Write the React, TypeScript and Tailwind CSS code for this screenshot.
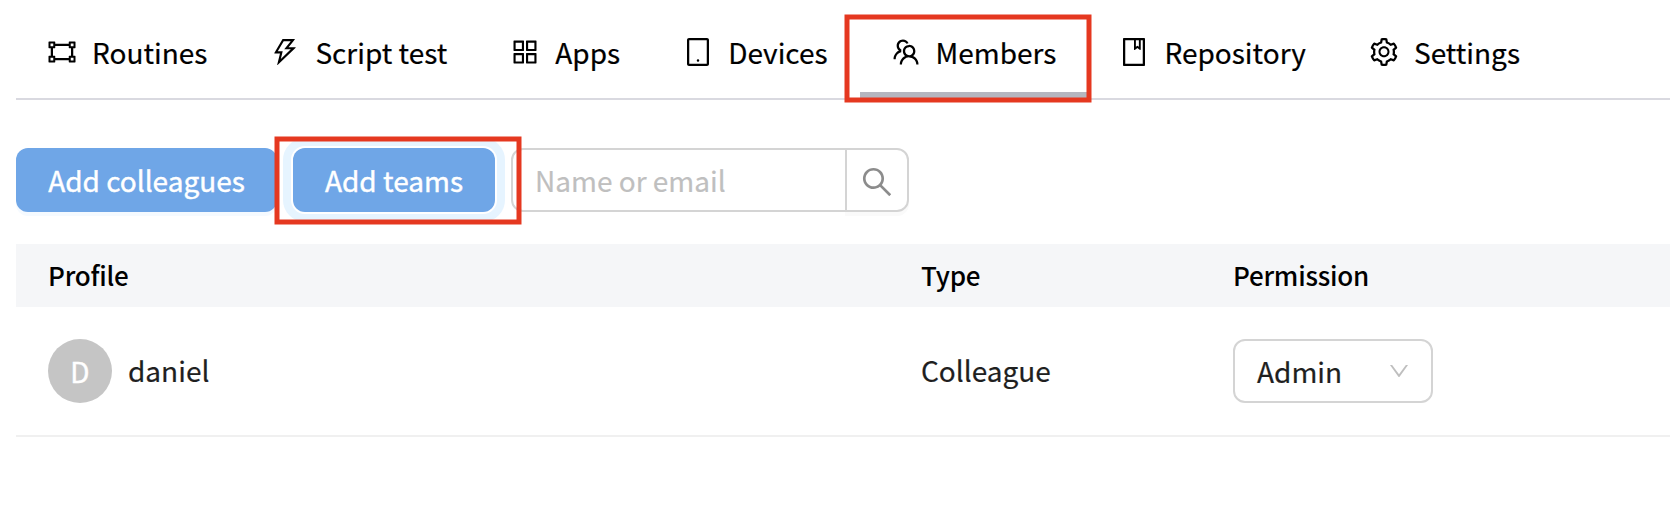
import type { ReactNode } from "react";
import {
  AiOutlineAppstore,
  AiOutlineBook,
  AiOutlineDown,
  AiOutlineGateway,
  AiOutlineSearch,
  AiOutlineSetting,
  AiOutlineTablet,
  AiOutlineTeam,
  AiOutlineThunderbolt,
} from "react-icons/ai";

const tabs = [
  { label: "Routines", Icon: AiOutlineGateway },
  { label: "Script test", Icon: AiOutlineThunderbolt },
  { label: "Apps", Icon: AiOutlineAppstore },
  { label: "Devices", Icon: AiOutlineTablet },
  { label: "Members", Icon: AiOutlineTeam, active: true },
  { label: "Repository", Icon: AiOutlineBook },
  { label: "Settings", Icon: AiOutlineSetting },
];

function Highlight({ className, children }: { className: string; children: ReactNode }) {
  return (
    <div className="relative flex">
      {children}
      <svg
        className={`pointer-events-none absolute z-10 h-[89px] w-[248px] max-w-none ${className}`}
        viewBox="0 0 248 89"
        fill="none"
      >
        <rect x="3" y="3" width="242" height="83" stroke="#e53820" strokeWidth="5" />
      </svg>
    </div>
  );
}

function Tab({ label, Icon, active }: (typeof tabs)[number]) {
  return (
    <div className="relative flex h-[98px] items-center gap-4 px-8 pt-1.5">
      <Icon className="-m-0.5 size-8" />
      <span>{label}</span>
      {active && <div className="absolute inset-x-0 bottom-0 h-1.5 bg-[#b5b6bf]" />}
    </div>
  );
}

export default function App() {
  return (
    <div className="h-[520px] w-[1670px] overflow-hidden bg-white pl-4 font-['Noto_Sans_CJK_KR','Noto_Sans_CJK_SC',sans-serif] text-[28px] leading-[44px] whitespace-nowrap text-black [-webkit-text-stroke:0.2px]">
      <nav className="flex h-[100px] border-b-2 border-[#d9d9e0]">
        {tabs.map((tab) =>
          tab.active ? (
            <Highlight key={tab.label} className="-left-4 top-3.5">
              <Tab {...tab} />
            </Highlight>
          ) : (
            <Tab key={tab.label} {...tab} />
          ),
        )}
      </nav>

      <div className="mt-12 flex h-16 gap-4">
        <button className="h-16 w-[261px] rounded-xl bg-[#6fa6e7] text-white shadow-[0_4px_0_#f5faff] [-webkit-text-stroke:0.4px]">
          Add colleagues
        </button>
        <Highlight className="-left-[19px] -top-3">
          <button className="h-16 w-[202px] rounded-xl bg-[#6fa6e7] text-white outline-8 outline-offset-2 outline-[#e6f4ff] [-webkit-text-stroke:0.4px]">
            Add teams
          </button>
        </Highlight>
        <div className="flex">
          <div className="flex h-16 w-[336px] items-center rounded-l-xl border-2 border-[#d4d4d4] px-[22px] text-[#bfbfbf]">
            Name or email
          </div>
          <button className="-ml-0.5 flex h-16 w-16 items-center justify-center rounded-r-xl border-2 border-[#d4d4d4] pt-1 text-[#8c8c8c] shadow-[0_4px_0_#fafafa]">
            <AiOutlineSearch className="size-9" />
          </button>
        </div>
      </div>

      <div className="mt-8 grid grid-cols-[873px_312px_1fr]">
        <div className="col-span-3 grid h-[63px] grid-cols-subgrid items-center bg-[#f5f6f8] pb-0.5 text-[26px] font-medium tracking-[-0.22px] [-webkit-text-stroke:0]">
          <div className="pl-8">Profile</div>
          <div className="pl-8">Type</div>
          <div className="pl-8">Permission</div>
        </div>
        <div className="col-span-3 grid h-[130px] grid-cols-subgrid items-center border-b-2 border-[#f0f0f0] text-[#1f1f1f]">
          <div className="flex items-center gap-4 pl-8">
            <div className="flex size-16 items-center justify-center rounded-full bg-[#c5c5c5] text-white [-webkit-text-stroke:0.4px]">
              D
            </div>
            <span className="pb-0.5">daniel</span>
          </div>
          <div className="pb-0.5 pl-8">Colleague</div>
          <div className="pl-8">
            <div className="flex h-16 w-[200px] items-center justify-between rounded-xl border-2 border-[#d4d4d4] pl-[22px] pr-5">
              <span>Admin</span>
              <AiOutlineDown className="size-6 text-[#bfbfbf]" />
            </div>
          </div>
        </div>
      </div>
    </div>
  );
}
